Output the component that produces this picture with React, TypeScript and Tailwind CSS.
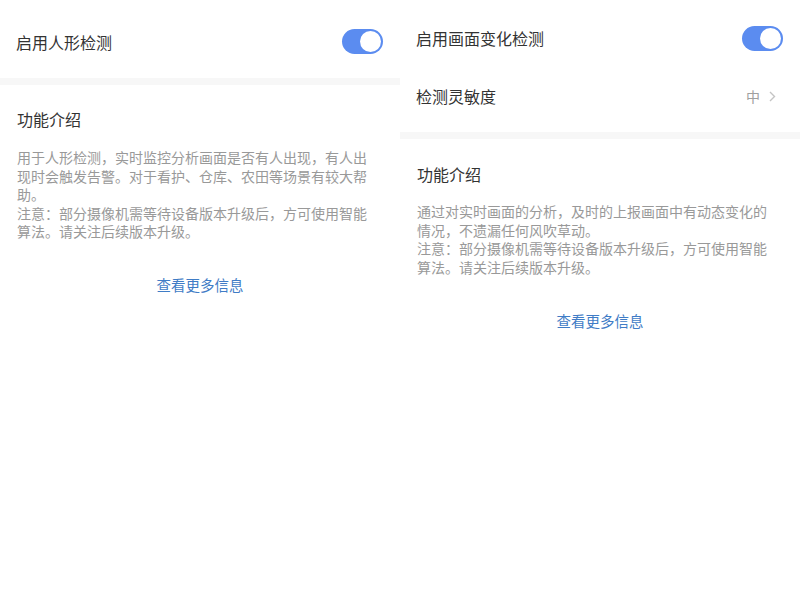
import React from "react";

const font = { fontFamily: '"Noto Sans CJK SC", "Noto Sans", sans-serif' };

const Toggle: React.FC = () => (
  <div className="w-[41px] h-[25px] rounded-full bg-[#5b8cf0] flex items-center justify-end pr-[2px]">
    <div className="w-[21px] h-[21px] rounded-full bg-white" />
  </div>
);

const Intro: React.FC<{ lines: string; top: string; bodyTop: string; linkTop: string }> = ({
  lines,
  top,
  bodyTop,
  linkTop,
}) => (
  <div className={`px-[17px] ${top}`}>
    <div className="text-[16px] leading-[24px] text-[#333]">功能介绍</div>
    <p className={`w-[356px] text-[14px] leading-[18.6px] text-[#999] ${bodyTop}`}>
      {lines}
      <br />
      注意：部分摄像机需等待设备版本升级后，方可使用智能算法。请关注后续版本升级。
    </p>
    <div className={`text-center text-[14.5px] leading-[20px] text-[#3f7cc6] ${linkTop}`}>
      查看更多信息
    </div>
  </div>
);

export default function App() {
  return (
    <div className="w-[800px] h-[600px] bg-white flex" style={font}>
      <div className="w-[400px] flex flex-col">
        <div className="h-[78px] pt-[5px] pl-[16px] pr-[17px] flex items-center justify-between">
          <span className="text-[16px] text-[#333]">启用人形检测</span>
          <Toggle />
        </div>
        <div className="h-[7px] bg-[#f7f7f7]" />
        <Intro
          lines="用于人形检测，实时监控分析画面是否有人出现，有人出现时会触发告警。对于看护、仓库、农田等场景有较大帮助。"
          top="pt-[22px]"
          bodyTop="mt-[17px]"
          linkTop="mt-[34px]"
        />
      </div>
      <div className="w-[400px] flex flex-col">
        <div className="h-[68px] pt-[8px] pl-[16px] pr-[17px] flex items-center justify-between">
          <span className="text-[16px] text-[#333]">启用画面变化检测</span>
          <Toggle />
        </div>
        <div className="h-[64px] pb-[8px] pl-[16px] pr-[24px] flex items-center justify-between">
          <span className="text-[16px] text-[#333]">检测灵敏度</span>
          <div className="flex items-center gap-[9px]">
            <span className="text-[14px] text-[#a0a0a0]">中</span>
            <svg width="7" height="11" viewBox="0 0 7 11" fill="none">
              <path d="M1 1l4.5 4.5L1 10" stroke="#c4c4c4" strokeWidth="1.4" />
            </svg>
          </div>
        </div>
        <div className="h-[7px] bg-[#f7f7f7]" />
        <Intro
          lines="通过对实时画面的分析，及时的上报画面中有动态变化的情况，不遗漏任何风吹草动。"
          top="pt-[23px]"
          bodyTop="mt-[16px]"
          linkTop="mt-[35px]"
        />
      </div>
    </div>
  );
}
